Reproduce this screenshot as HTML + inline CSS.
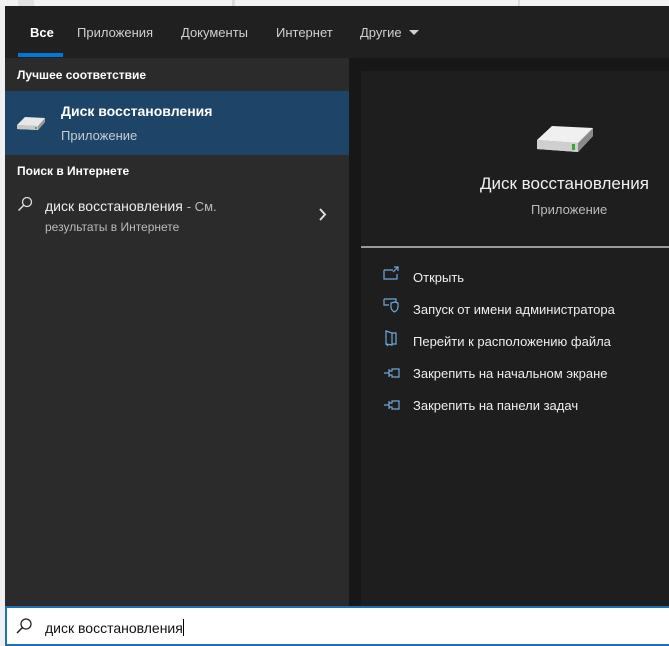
<!DOCTYPE html>
<html><head><meta charset="utf-8"><style>
*{margin:0;padding:0;box-sizing:border-box}
body{width:669px;height:646px;overflow:hidden;background:#f0f0f0;font-family:"Liberation Sans","DejaVu Sans",sans-serif;position:relative}
.a{position:absolute}
.t{color:#d0d0d0;font-size:13px;white-space:nowrap}
.w{color:#fff}
</style></head><body>
<div class="a" style="left:0;top:0;width:669px;height:6px;background:#f3f3f3"></div>
<div class="a" style="left:18px;top:0;width:16px;height:6px;background:#e2e2e2"></div>
<div class="a" style="left:232px;top:0;width:3px;height:6px;background:#dcdcdc"></div>
<div class="a" style="left:518px;top:0;width:2px;height:6px;background:#dcdcdc"></div>
<div class="a" style="left:5px;top:6px;width:664px;height:52px;background:#202020"></div>
<div class="a t w" style="left:30px;top:25px;font-weight:bold">Все</div>
<div class="a" style="left:18px;top:53px;width:45px;height:4px;background:#0078d7"></div>
<div class="a t" style="left:77px;top:25px">Приложения</div>
<div class="a t" style="left:181px;top:25px">Документы</div>
<div class="a t" style="left:276px;top:25px">Интернет</div>
<div class="a t" style="left:360px;top:25px">Другие</div>
<svg class="a" style="left:408px;top:29px" width="12" height="8"><path d="M1 1h10L6 6z" fill="#d0d0d0"/></svg>

<div class="a" style="left:5px;top:58px;width:344px;height:548px;background:#2b2b2b"></div>
<div class="a t w" style="left:17px;top:68px;font-weight:bold;font-size:12px">Лучшее соответствие</div>
<div class="a" style="left:5px;top:91px;width:344px;height:64px;background:#1e4467"></div>
<svg class="a" style="left:15px;top:112px" width="32" height="22" viewBox="0 0 32 22"><path d="M2 13 L10 5 L30 6 L30 10 L23 18 L2 17 Z" fill="#e8e8e8"/><path d="M2 13 L23 14 L30 6 L30 10 L23 18 L2 17 Z" fill="#9a9a9a"/><path d="M2 13 L23 14 L23 18 L2 17Z" fill="#c8c8c8"/><rect x="20" y="15" width="2" height="2" fill="#5a5"/></svg>
<div class="a t w" style="left:61px;top:103px;font-weight:bold;font-size:14px">Диск восстановления</div>
<div class="a t" style="left:61px;top:128px;color:#c4ccd4">Приложение</div>
<div class="a t w" style="left:17px;top:164px;font-weight:bold;font-size:12px">Поиск в Интернете</div>
<svg class="a" style="left:17px;top:196px" width="16" height="16"><circle cx="10" cy="6" r="4.5" fill="none" stroke="#ddd" stroke-width="1.3"/><path d="M7 9 L1.5 14.5" stroke="#ddd" stroke-width="1.5"/></svg>
<div class="a t" style="left:45px;top:198px;font-size:14px;color:#eee">диск восстановления <span style="font-size:13px;color:#bbb">- См.</span></div>
<div class="a t" style="left:45px;top:220px;font-size:12px;color:#bbb">результаты в Интернете</div>
<svg class="a" style="left:318px;top:208px" width="10" height="14"><path d="M2 1 L7 6.5 L2 12" fill="none" stroke="#ddd" stroke-width="2"/></svg>

<div class="a" style="left:349px;top:58px;width:320px;height:548px;background:#171717"></div>
<div class="a" style="left:361px;top:71px;width:308px;height:535px;background:#1e1e1e"></div>
<svg class="a" style="left:534px;top:120px" width="62" height="38" viewBox="0 0 62 38"><path d="M3 20 L18 6 L59 8 L59 16 L44 32 L3 29 Z" fill="#f0f0f0"/><path d="M3 20 L44 23 L59 8 L59 16 L44 32 L3 29 Z" fill="#8a8a8a"/><path d="M3 20 L44 23 L44 32 L3 29Z" fill="#cfcfcf"/><rect x="38" y="24" width="3" height="6" fill="#3a3"/></svg>
<div class="a t w" style="left:480px;top:174px;font-size:17px;color:#f0f0f0">Диск восстановления</div>
<div class="a t" style="left:531px;top:202px;color:#bbb">Приложение</div>
<div class="a" style="left:361px;top:246px;width:308px;height:2px;background:#9a9a9a"></div>
<svg class="a" style="left:383px;top:266px" width="20" height="160" fill="none" stroke="#6fa8dc" stroke-width="1.2">
<path d="M1 4 H10 M1 4 V13 H14 V8 M11 1 H15 V5 M15 1 L10 6"/>
<path d="M1 33 V39 H6 M1 33 H13 V36 M8 37 L11.5 36 L15 37 V41 Q15 44 11.5 46 Q8 44 8 41 Z"/>
<path d="M3 65 L9 67 V79 L3 78 Z M9 67 H13 V78 H9 M3 78 L5 80"/>
<path d="M1 107 H6 M6 103 V111 M6 105 H9 V103 H16 V111 H9 V109 H6"/>
<path d="M1 139 H6 M6 135 V143 M6 137 H9 V135 H16 V143 H9 V141 H6"/>
</svg>
<div class="a t" style="left:413px;top:270px;color:#eee">Открыть</div>
<div class="a t" style="left:413px;top:302px;color:#eee">Запуск от имени администратора</div>
<div class="a t" style="left:413px;top:334px;color:#eee">Перейти к расположению файла</div>
<div class="a t" style="left:413px;top:366px;color:#eee">Закрепить на начальном экране</div>
<div class="a t" style="left:413px;top:398px;color:#eee">Закрепить на панели задач</div>

<div class="a" style="left:5px;top:606px;width:664px;height:40px;background:#fff;border:2px solid #1f6fb5;border-right:none"></div>
<svg class="a" style="left:15px;top:617px" width="18" height="18"><circle cx="11" cy="7" r="5" fill="none" stroke="#222" stroke-width="1.3"/><path d="M7.5 10.5 L2 16" stroke="#222" stroke-width="1.5"/></svg>
<div class="a" style="left:45px;top:619px;font-size:14px;color:#111;white-space:nowrap">диск восстановления<span style="display:inline-block;width:1px;height:17px;background:#000;vertical-align:-3px"></span></div>
</body></html>
